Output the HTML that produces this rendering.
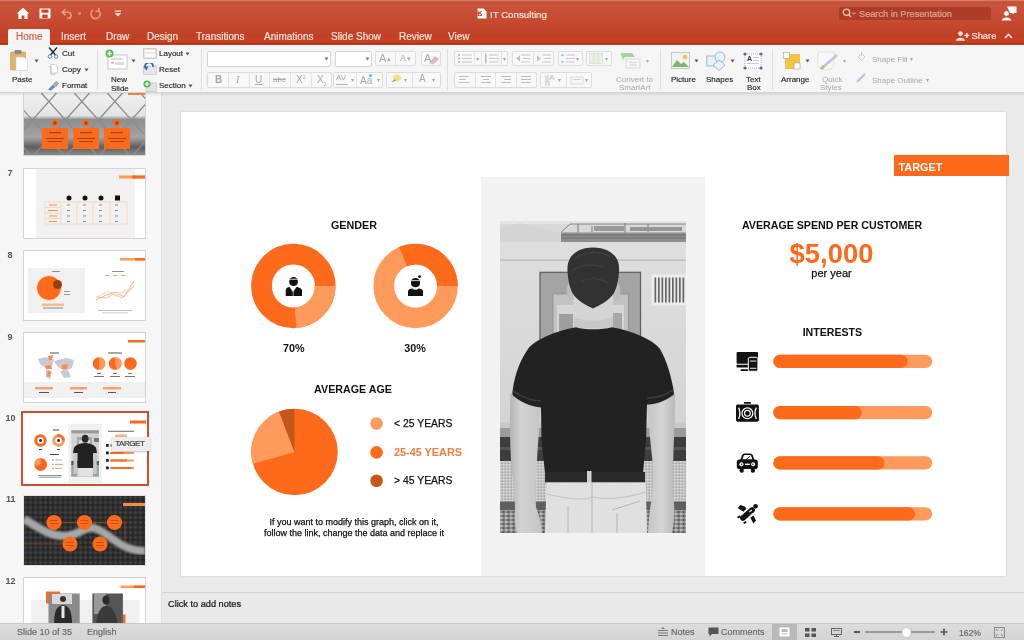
<!DOCTYPE html>
<html><head><meta charset="utf-8">
<style>
*{margin:0;padding:0;box-sizing:border-box}
html,body{width:1024px;height:640px;overflow:hidden;background:#e6e6e6;font-family:"Liberation Sans",sans-serif}
body{will-change:transform}
.a{position:absolute}
.t{position:absolute;white-space:nowrap;line-height:1}
#title{left:0;top:0;width:1024px;height:45px;background:linear-gradient(#e27c64 0px,#dd745c 1px,#c0523b 1.6px,#c9533b 5px,#c64c32 18px,#c3442a 32px,#bb4229 36px,#cc3f1e 39px,#cd3f1d 42px,#a63a22 43.6px,#b44c36 45px)}
.tab{color:#f8e0d8;font-size:10px;top:32px;-webkit-text-stroke:0.2px currentColor}
#ribbon{left:0;top:45px;width:1024px;height:48px;background:#f5f5f5;border-bottom:1px solid #d4d4d4;box-shadow:0 1px 2px rgba(0,0,0,0.08)}
.rl{font-size:8px;color:#262626;-webkit-text-stroke:0.15px #262626}
.gl{font-size:8px;color:#a8a8a8}
.btn{position:absolute;background:#f8f8f8;border:1px solid #dcdcdc;border-radius:2px}
.sep{position:absolute;top:49px;width:1px;height:41px;background:#dedede}
#left{left:0;top:93px;width:162px;height:530px;background:#f6f6f6;border-right:1px solid #e0e0e0}
.num{font-size:9px;font-weight:bold;color:#555}
.th{position:absolute;left:23px;width:123px;height:71px;background:#fff;border:1px solid #d4d4d4;overflow:hidden}
#status{left:0;top:623px;width:1024px;height:17px;background:linear-gradient(#dcdcdc,#d4d4d4);border-top:1px solid #c8c8c8}
.st{font-size:9px;color:#666;top:628px;-webkit-text-stroke:0.15px #666}
</style></head><body>

<!-- TITLE BAR -->
<div id="title" class="a"></div>
<!-- home icon -->
<svg class="a" style="left:16px;top:7px" width="14" height="13" viewBox="0 0 14 13"><path d="M7 0.8 L0.8 6.6 L2.4 6.6 L2.4 12 L5.6 12 L5.6 8.6 L8.4 8.6 L8.4 12 L11.6 12 L11.6 6.6 L13.2 6.6 Z" fill="#fff"/></svg>
<!-- save -->
<svg class="a" style="left:39px;top:8px" width="12" height="11" viewBox="0 0 12 11"><path d="M0.5 0.5 H11.5 V10.5 H0.5 Z" fill="#fff"/><rect x="2.5" y="1.5" width="7" height="3.3" fill="#c84a2d"/><rect x="3.2" y="6.5" width="5.5" height="3.5" fill="#c84a2d"/></svg>
<!-- undo -->
<svg class="a" style="left:61px;top:8px" width="13" height="11" viewBox="0 0 13 11"><path d="M4.5 1 L1.2 4.2 L4.5 7.3 M1.5 4.2 H7.5 A3.2 3.2 0 0 1 7.5 10.5 H6" stroke="#e59a85" stroke-width="1.6" fill="none"/></svg>
<div class="a" style="left:78px;top:12px;width:3px;height:3px;background:#e08a74;border-radius:1px"></div>
<!-- redo -->
<svg class="a" style="left:89px;top:7px" width="13" height="13" viewBox="0 0 13 13"><path d="M4 3.2 A4.6 4.6 0 1 0 9.5 3.5 M9.8 0.8 V4.2 H6.5" stroke="#e59a85" stroke-width="1.6" fill="none"/></svg>
<svg class="a" style="left:114px;top:10px" width="8" height="7" viewBox="0 0 8 7"><rect x="1" y="0.5" width="6" height="1.3" fill="#fbe0d8"/><path d="M0.8 3 H7.2 L4 6.5 Z" fill="#fbe0d8"/></svg>
<!-- ppt doc icon + title -->
<svg class="a" style="left:477px;top:8px" width="10" height="11" viewBox="0 0 10 11"><path d="M0.5 0.5 H6.5 L9.5 3.5 V10.5 H0.5 Z" fill="#fff"/><path d="M0.5 3 H5 V8 H0.5 Z" fill="#c84a2d"/><path d="M1.6 3.8 H3.4 A1.3 1.3 0 0 1 3.4 6.4 H2.4 V7.4" stroke="#fff" stroke-width="1" fill="none"/></svg>
<div class="t" style="left:490px;top:9.7px;font-size:9.7px;color:#fbe3dc;-webkit-text-stroke:0.2px #fbe3dc">IT Consulting</div>
<!-- search -->
<div class="a" style="left:839px;top:6.5px;width:152px;height:13px;background:#ad3d28;border-radius:2px"></div>
<svg class="a" style="left:842px;top:8px" width="14" height="11" viewBox="0 0 14 11"><circle cx="4.5" cy="4.3" r="3.2" stroke="#f0c0b2" stroke-width="1.3" fill="none"/><path d="M6.8 6.6 L9 9" stroke="#f0c0b2" stroke-width="1.4"/><path d="M10 4.5 L11.8 6.3 L13.6 4.5" stroke="#f0c0b2" stroke-width="1" fill="none"/></svg>
<div class="t" style="left:859px;top:9.5px;font-size:9.2px;color:#e2a393;-webkit-text-stroke:0.2px #e2a393">Search in Presentation</div>
<!-- feedback icon -->
<svg class="a" style="left:1001px;top:6px" width="16" height="15" viewBox="0 0 16 15"><path d="M6 0.5 H15.5 V7 H13 L11.5 8.5 V7 H9" fill="#fff"/><circle cx="5.5" cy="7.5" r="2.8" fill="#fff" stroke="#c84a2d" stroke-width="0.8"/><path d="M0.8 14.5 C0.8 10.5 10.2 10.5 10.2 14.5 Z" fill="#fff"/></svg>

<!-- tabs -->
<div class="a" style="left:8px;top:29px;width:42px;height:17px;background:#f6f4f3;border-radius:2px 2px 0 0"></div>
<div class="t tab" style="left:16px;color:#d25f45">Home</div>
<div class="t tab" style="left:61px">Insert</div>
<div class="t tab" style="left:106px">Draw</div>
<div class="t tab" style="left:147px">Design</div>
<div class="t tab" style="left:196px">Transitions</div>
<div class="t tab" style="left:264px">Animations</div>
<div class="t tab" style="left:331px">Slide Show</div>
<div class="t tab" style="left:399px">Review</div>
<div class="t tab" style="left:448px">View</div>
<!-- share -->
<svg class="a" style="left:956px;top:31px" width="14" height="10" viewBox="0 0 14 10"><circle cx="4.5" cy="2.6" r="2.3" fill="#fbe3dc"/><path d="M0 9.8 C0 5.6 9 5.6 9 9.8 Z" fill="#fbe3dc"/><path d="M10.8 2 V7 M8.3 4.5 H13.3" stroke="#fbe3dc" stroke-width="1.5"/></svg>
<div class="t tab" style="left:971.5px;top:31.5px;font-size:9.3px;color:#fbe3dc">Share</div>
<svg class="a" style="left:1004px;top:33px" width="9" height="6" viewBox="0 0 9 6"><path d="M1 5 L4.5 1.5 L8 5" stroke="#fbe3dc" stroke-width="1.6" fill="none"/></svg>

<!-- RIBBON -->
<div id="ribbon" class="a"></div>

<!-- paste -->
<svg class="a" style="left:10px;top:49px" width="18" height="22" viewBox="0 0 18 22"><rect x="0.5" y="3" width="15" height="18" rx="1" fill="#e0b36a" stroke="#c99a50" stroke-width="0.6"/><rect x="4.5" y="1" width="7" height="4" rx="1" fill="#8a8a8a"/><path d="M6 8 H14 L17.5 11.5 V21.5 H6 Z" fill="#fff" stroke="#cfcfcf" stroke-width="0.6"/></svg>
<svg class="a" style="left:34px;top:59px" width="5" height="4"><path d="M0.5 0.5 H4.5 L2.5 3.5Z" fill="#555"/></svg>
<div class="t rl" style="left:12px;top:76px">Paste</div>
<!-- cut copy format -->
<svg class="a" style="left:47px;top:47px" width="12" height="12" viewBox="0 0 12 12"><path d="M2 0.5 L8.5 8 M10 0.5 L3.5 8" stroke="#222" stroke-width="1.3"/><circle cx="3" cy="9.5" r="1.8" fill="none" stroke="#4f86c6" stroke-width="1"/><circle cx="9" cy="9.5" r="1.8" fill="none" stroke="#4f86c6" stroke-width="1"/></svg>
<div class="t rl" style="left:62px;top:50px">Cut</div>
<svg class="a" style="left:48px;top:64px" width="10" height="11" viewBox="0 0 10 11"><path d="M3 0.5 H7 L9.5 3 V9 H3 Z" fill="#fff" stroke="#bbb" stroke-width="0.7"/><path d="M0.5 2.5 H3 V10.5 H7 V9" fill="none" stroke="#bbb" stroke-width="0.7"/></svg>
<div class="t rl" style="left:62px;top:66px">Copy</div>
<svg class="a" style="left:84px;top:68px" width="5" height="4"><path d="M0.5 0.5 H4.5 L2.5 3.5Z" fill="#555"/></svg>
<svg class="a" style="left:47px;top:81px" width="12" height="10" viewBox="0 0 12 10"><path d="M1 8.5 L6 3.5 L8.5 6 L3.5 9.8 Z" fill="#6a8bb8"/><path d="M6.5 3 L9.5 0.5 L11.5 2.5 L9 5.5 Z" fill="#9bb4d6" stroke="#666" stroke-width="0.5"/></svg>
<div class="t rl" style="left:62px;top:82px">Format</div>
<div class="sep" style="left:97px"></div>
<!-- new slide -->
<svg class="a" style="left:105px;top:49px" width="23" height="21" viewBox="0 0 23 21"><rect x="3" y="6" width="19" height="14" fill="#fff" stroke="#bcbcbc" stroke-width="0.8"/><rect x="6" y="9" width="12" height="2" fill="#ddd"/><rect x="6" y="13" width="3" height="1.5" fill="#c9a0d0"/><rect x="10" y="13" width="9" height="3" fill="#ddd"/><circle cx="4.5" cy="4.5" r="4" fill="#5cb85c"/><path d="M4.5 2.3 V6.7 M2.3 4.5 H6.7" stroke="#fff" stroke-width="1.4"/></svg>
<svg class="a" style="left:131px;top:59px" width="5" height="4"><path d="M0.5 0.5 H4.5 L2.5 3.5Z" fill="#555"/></svg>
<div class="t rl" style="left:111px;top:76px">New</div>
<div class="t rl" style="left:111px;top:85px">Slide</div>
<svg class="a" style="left:143px;top:48px" width="14" height="11" viewBox="0 0 14 11"><rect x="0.5" y="0.5" width="13" height="10" fill="#e6e6e6" stroke="#bbb" stroke-width="0.6"/><rect x="2" y="2" width="10" height="2" fill="#fafafa"/><rect x="2" y="5.5" width="10" height="3.5" fill="#fafafa"/></svg>
<div class="t rl" style="left:159px;top:50px">Layout</div>
<svg class="a" style="left:185px;top:52px" width="5" height="4"><path d="M0.5 0.5 H4.5 L2.5 3.5Z" fill="#555"/></svg>
<svg class="a" style="left:143px;top:63px" width="14" height="12" viewBox="0 0 14 12"><rect x="0.5" y="3" width="13" height="8.5" fill="#e6e6e6" stroke="#bbb" stroke-width="0.6"/><path d="M3 6 A4 4 0 1 1 10 4" stroke="#2f6fba" stroke-width="1.8" fill="none"/><path d="M0.5 3.5 L3.5 7.5 L5.5 3.5Z" fill="#2f6fba"/></svg>
<div class="t rl" style="left:159px;top:66px">Reset</div>
<svg class="a" style="left:143px;top:80px" width="14" height="12" viewBox="0 0 14 12"><rect x="3" y="3" width="10.5" height="8.5" fill="#e2e2e2" stroke="#bbb" stroke-width="0.6"/><circle cx="4" cy="4" r="3.6" fill="#5cb85c"/><path d="M4 2 V6 M2 4 H6" stroke="#fff" stroke-width="1.2"/></svg>
<div class="t rl" style="left:159px;top:82px">Section</div>
<svg class="a" style="left:188px;top:84px" width="5" height="4"><path d="M0.5 0.5 H4.5 L2.5 3.5Z" fill="#555"/></svg>
<div class="sep" style="left:201px"></div>
<!-- font -->
<div class="btn" style="left:207px;top:51px;width:124px;height:16px;background:#fff;border-color:#d4d4d4"></div>
<svg class="a" style="left:324px;top:57px" width="5" height="4"><path d="M0.5 0.5 H4.5 L2.5 3.5Z" fill="#777"/></svg>
<div class="btn" style="left:335px;top:51px;width:37px;height:16px;background:#fff;border-color:#d4d4d4"></div>
<svg class="a" style="left:365px;top:57px" width="5" height="4"><path d="M0.5 0.5 H4.5 L2.5 3.5Z" fill="#777"/></svg>
<div class="btn" style="left:375px;top:51px;width:41px;height:15px"></div>
<div class="a" style="left:395px;top:52px;width:1px;height:13px;background:#e3e3e3"></div>
<div class="t gl" style="left:379px;top:53px;font-size:11px">A</div><div class="t gl" style="left:387px;top:55px;font-size:7px">&#9652;</div>
<div class="t gl" style="left:400px;top:54px;font-size:9px">A</div><div class="t gl" style="left:407px;top:55px;font-size:7px">&#9662;</div>
<div class="btn" style="left:421px;top:51px;width:20px;height:15px"></div>
<div class="t gl" style="left:424px;top:53px;font-size:11px">A</div>
<svg class="a" style="left:427px;top:54px" width="13" height="11" viewBox="0 0 13 11"><path d="M2 9 L8 2 L12 5 L6 10.5 Z" fill="#e8a4b8" opacity="0.85"/></svg>
<div class="btn" style="left:207px;top:72px;width:125px;height:16px"></div>
<div class="a" style="left:228px;top:73px;width:1px;height:14px;background:#e3e3e3"></div>
<div class="a" style="left:249px;top:73px;width:1px;height:14px;background:#e3e3e3"></div>
<div class="a" style="left:269px;top:73px;width:1px;height:14px;background:#e3e3e3"></div>
<div class="a" style="left:290px;top:73px;width:1px;height:14px;background:#e3e3e3"></div>
<div class="a" style="left:311px;top:73px;width:1px;height:14px;background:#e3e3e3"></div>
<div class="t gl" style="left:215px;top:75px;font-size:10px;font-weight:bold">B</div>
<div class="t gl" style="left:236px;top:75px;font-size:10px;font-style:italic;font-family:'Liberation Serif',serif">I</div>
<div class="t gl" style="left:255px;top:75px;font-size:10px;text-decoration:underline">U</div>
<div class="t gl" style="left:273px;top:76px;font-size:8px;text-decoration:line-through">abc</div>
<div class="t gl" style="left:296px;top:75px;font-size:10px">X<sup style="font-size:5px">2</sup></div>
<div class="t gl" style="left:317px;top:75px;font-size:10px">X<sub style="font-size:5px">2</sub></div>
<div class="btn" style="left:333px;top:72px;width:50px;height:16px"></div>
<div class="a" style="left:356px;top:73px;width:1px;height:14px;background:#e3e3e3"></div>
<div class="t gl" style="left:336px;top:74px;font-size:8px">AV</div>
<div class="a" style="left:336px;top:84px;width:12px;height:1px;background:#9ec0e0"></div>
<div class="t gl" style="left:351px;top:77px;font-size:6px">&#9662;</div>
<div class="t gl" style="left:360px;top:76px;font-size:10px">Aa</div>
<div class="a" style="left:369px;top:74px;width:3px;height:3px;border-radius:2px;background:#6ab0e8"></div>
<div class="t gl" style="left:377px;top:77px;font-size:6px">&#9662;</div>
<div class="btn" style="left:386px;top:72px;width:55px;height:16px"></div>
<div class="a" style="left:412px;top:73px;width:1px;height:14px;background:#e3e3e3"></div>
<svg class="a" style="left:390px;top:74px" width="12" height="10" viewBox="0 0 12 10"><ellipse cx="7" cy="4" rx="4" ry="3.5" fill="#f3e08a"/><path d="M1 8 L5 5 L6 7 Z" fill="#999"/></svg>
<div class="t gl" style="left:404px;top:77px;font-size:6px">&#9662;</div>
<div class="t gl" style="left:419px;top:74px;font-size:10px">A</div>
<div class="t gl" style="left:432px;top:77px;font-size:6px">&#9662;</div>
<div class="sep" style="left:447px"></div>
<!-- paragraph -->
<div class="btn" style="left:454px;top:51px;width:54px;height:15px"></div>
<div class="a" style="left:474px;top:52px;width:1px;height:13px;background:#e3e3e3"></div>
<div class="a" style="left:481px;top:52px;width:1px;height:13px;background:#e3e3e3"></div>
<div class="a" style="left:501px;top:52px;width:1px;height:13px;background:#e3e3e3"></div>
<svg class="a" style="left:457px;top:53px" width="16" height="11" viewBox="0 0 16 11"><g fill="#a9c6e6"><rect x="1" y="1" width="2" height="2"/><rect x="1" y="4.5" width="2" height="2"/><rect x="1" y="8" width="2" height="2"/></g><g fill="#c8c8c8"><rect x="5" y="1.5" width="10" height="1"/><rect x="5" y="5" width="10" height="1"/><rect x="5" y="8.5" width="10" height="1"/></g></svg>
<div class="t gl" style="left:476px;top:56px;font-size:6px">&#9662;</div>
<svg class="a" style="left:484px;top:53px" width="16" height="11" viewBox="0 0 16 11"><g fill="#bbb"><rect x="1" y="0.5" width="1.5" height="10"/></g><g fill="#c8c8c8"><rect x="5" y="1.5" width="10" height="1"/><rect x="5" y="5" width="10" height="1"/><rect x="5" y="8.5" width="10" height="1"/></g></svg>
<div class="t gl" style="left:503px;top:56px;font-size:6px">&#9662;</div>
<div class="btn" style="left:512px;top:51px;width:42px;height:15px"></div>
<div class="a" style="left:533px;top:52px;width:1px;height:13px;background:#e3e3e3"></div>
<svg class="a" style="left:515px;top:53px" width="16" height="11" viewBox="0 0 16 11"><path d="M1 5.5 L5 2.5 V8.5Z" fill="#a9c6e6"/><g fill="#c8c8c8"><rect x="6" y="1.5" width="9" height="1"/><rect x="8" y="5" width="7" height="1"/><rect x="6" y="8.5" width="9" height="1"/></g></svg>
<svg class="a" style="left:536px;top:53px" width="16" height="11" viewBox="0 0 16 11"><path d="M1 2.5 L5 5.5 L1 8.5Z" fill="#a9c6e6"/><g fill="#c8c8c8"><rect x="6" y="1.5" width="9" height="1"/><rect x="8" y="5" width="7" height="1"/><rect x="6" y="8.5" width="9" height="1"/></g></svg>
<div class="btn" style="left:558px;top:51px;width:25px;height:15px"></div>
<svg class="a" style="left:560px;top:53px" width="16" height="11" viewBox="0 0 16 11"><path d="M2.5 0.5 L4.5 3 H0.5Z M2.5 10.5 L4.5 8 H0.5Z" fill="#a9c6e6"/><g fill="#c8c8c8"><rect x="6" y="1.5" width="9" height="1"/><rect x="6" y="5" width="9" height="1"/><rect x="6" y="8.5" width="9" height="1"/></g></svg>
<div class="t gl" style="left:576px;top:56px;font-size:6px">&#9662;</div>
<div class="btn" style="left:586px;top:51px;width:26px;height:15px"></div>
<svg class="a" style="left:589px;top:53px" width="14" height="11" viewBox="0 0 14 11"><rect x="0.5" y="0.5" width="13" height="10" fill="#e8f2e0" stroke="#cfd8c8" stroke-width="0.6"/><path d="M4.8 1 V10 M9.2 1 V10" stroke="#cfd8c8" stroke-width="0.8"/></svg>
<div class="t gl" style="left:605px;top:56px;font-size:6px">&#9662;</div>
<div class="btn" style="left:454px;top:72px;width:83px;height:16px"></div>
<div class="a" style="left:475px;top:73px;width:1px;height:14px;background:#e3e3e3"></div>
<div class="a" style="left:495px;top:73px;width:1px;height:14px;background:#e3e3e3"></div>
<div class="a" style="left:516px;top:73px;width:1px;height:14px;background:#e3e3e3"></div>
<svg class="a" style="left:459px;top:75px" width="72" height="10" viewBox="0 0 72 10"><g fill="#bdbdbd"><rect x="0" y="1" width="10" height="1"/><rect x="0" y="4" width="7" height="1"/><rect x="0" y="7" width="10" height="1"/><rect x="22" y="1" width="10" height="1"/><rect x="24" y="4" width="6" height="1"/><rect x="22" y="7" width="10" height="1"/><rect x="42" y="1" width="10" height="1"/><rect x="45" y="4" width="7" height="1"/><rect x="42" y="7" width="10" height="1"/><rect x="62" y="1" width="10" height="1"/><rect x="62" y="4" width="10" height="1"/><rect x="62" y="7" width="10" height="1"/></g></svg>
<div class="btn" style="left:540px;top:72px;width:52px;height:16px"></div>
<div class="a" style="left:566px;top:73px;width:1px;height:14px;background:#e3e3e3"></div>
<div class="t gl" style="left:545px;top:74px;font-size:8px;color:#b5b5b5">||A</div>
<div class="t gl" style="left:545px;top:81px;font-size:5px;color:#b5b5b5">||||</div>
<div class="t gl" style="left:558px;top:77px;font-size:6px">&#9662;</div>
<svg class="a" style="left:570px;top:74px" width="14" height="12" viewBox="0 0 14 12"><rect x="1" y="3" width="12" height="7" fill="none" stroke="#cfcfcf" stroke-width="0.8"/><rect x="3" y="5" width="8" height="1" fill="#cfcfcf"/></svg>
<div class="t gl" style="left:585px;top:77px;font-size:6px">&#9662;</div>
<!-- smartart -->
<svg class="a" style="left:620px;top:52px" width="22" height="17" viewBox="0 0 22 17"><path d="M0.5 1 H12 L15 5 H5 L3 8 Z" fill="#a8cfa0"/><rect x="6" y="7" width="14" height="9" fill="#f5f5f5" stroke="#cfcfcf" stroke-width="0.7"/><rect x="9" y="10" width="8" height="1" fill="#d8d8d8"/><rect x="9" y="12.5" width="8" height="1" fill="#d8d8d8"/></svg>
<div class="t gl" style="left:646px;top:58px;font-size:6px">&#9662;</div>
<div class="t gl" style="left:616px;top:76px">Convert to</div>
<div class="t gl" style="left:619px;top:84px">SmartArt</div>
<div class="sep" style="left:660px"></div>
<!-- picture shapes textbox -->
<svg class="a" style="left:671px;top:52px" width="19" height="17" viewBox="0 0 19 17"><rect x="0.5" y="0.5" width="18" height="16" fill="#f2f2f2" stroke="#bdbdbd" stroke-width="0.8"/><path d="M1 15 L6 8 L10 12 L13 10 L18 15 Z" fill="#7fb86a"/><circle cx="14" cy="5" r="2.3" fill="#f0c050"/></svg>
<svg class="a" style="left:694px;top:59px" width="5" height="4"><path d="M0.5 0.5 H4.5 L2.5 3.5Z" fill="#555"/></svg>
<div class="t rl" style="left:671px;top:76px">Picture</div>
<svg class="a" style="left:706px;top:51px" width="21" height="20" viewBox="0 0 21 20"><rect x="0.8" y="5" width="10" height="10" fill="#eaf3fb" stroke="#8cb8e0" stroke-width="1"/><circle cx="14" cy="6" r="5" fill="#eaf3fb" stroke="#8cb8e0" stroke-width="1"/><path d="M13 9 L19 14 L13 19.5 L7 14 Z" fill="#eaf3fb" stroke="#8cb8e0" stroke-width="1"/></svg>
<svg class="a" style="left:730px;top:59px" width="5" height="4"><path d="M0.5 0.5 H4.5 L2.5 3.5Z" fill="#555"/></svg>
<div class="t rl" style="left:706px;top:76px">Shapes</div>
<svg class="a" style="left:743px;top:52px" width="20" height="18" viewBox="0 0 20 18"><rect x="2" y="2" width="16" height="14" fill="#fff" stroke="#9a9a9a" stroke-width="0.7" stroke-dasharray="1 1"/><g fill="#3a6fb0"><circle cx="2" cy="2" r="1.6"/><circle cx="18" cy="2" r="1.6"/><circle cx="2" cy="16" r="1.6"/><circle cx="18" cy="16" r="1.6"/></g><text x="4" y="9" font-size="7" font-weight="bold" fill="#333" font-family="Liberation Sans">A</text><g fill="#ccc"><rect x="10" y="5" width="6" height="1"/><rect x="10" y="8" width="6" height="1"/><rect x="4" y="11" width="12" height="1"/></g></svg>
<div class="t rl" style="left:746px;top:76px">Text</div>
<div class="t rl" style="left:747px;top:84px">Box</div>
<div class="sep" style="left:772px"></div>
<!-- arrange -->
<svg class="a" style="left:783px;top:52px" width="18" height="18" viewBox="0 0 18 18"><rect x="2" y="2" width="15" height="15" fill="#f5c242"/><rect x="0.5" y="0.5" width="6" height="6" fill="#fff" stroke="#999" stroke-width="0.6"/><rect x="11" y="11" width="6" height="6" fill="#fff" stroke="#999" stroke-width="0.6"/></svg>
<svg class="a" style="left:805px;top:59px" width="5" height="4"><path d="M0.5 0.5 H4.5 L2.5 3.5Z" fill="#555"/></svg>
<div class="t rl" style="left:781px;top:76px">Arrange</div>
<svg class="a" style="left:817px;top:51px" width="25" height="20" viewBox="0 0 25 20"><path d="M1 1 H17 V12 C17 17 12 19 9 19 C4 19 1 16 1 12 Z" fill="#f7f7f7" stroke="#d8d8d8" stroke-width="0.7"/><path d="M5 17 L20 4" stroke="#b0c8e0" stroke-width="2.5"/><path d="M4 18 L7 15" stroke="#e0b070" stroke-width="3"/></svg>
<div class="t gl" style="left:843px;top:58px;font-size:6px">&#9662;</div>
<div class="t gl" style="left:822px;top:76px">Quick</div>
<div class="t gl" style="left:820px;top:84px">Styles</div>
<svg class="a" style="left:856px;top:52px" width="11" height="11" viewBox="0 0 11 11"><path d="M2 5 L5.5 1.5 L9 5 L5.5 8.5 Z" fill="none" stroke="#c8c8c8" stroke-width="0.9"/><path d="M5.5 0 V4" stroke="#c8c8c8" stroke-width="0.9"/></svg>
<div class="t gl" style="left:872px;top:56px">Shape Fill</div>
<div class="t gl" style="left:910px;top:56px;font-size:6px">&#9662;</div>
<svg class="a" style="left:856px;top:73px" width="11" height="10" viewBox="0 0 11 10"><path d="M1 9 L9 1" stroke="#a8c4e4" stroke-width="2"/></svg>
<div class="t gl" style="left:872px;top:77px">Shape Outline</div>
<div class="t gl" style="left:926px;top:77px;font-size:6px">&#9662;</div>

<!-- MAIN AREA -->
<div class="a" style="left:162px;top:93px;width:862px;height:500px;background:#eaeaea"></div>
<div class="a" style="left:162px;top:592px;width:862px;height:1px;background:#d0d0d0"></div>
<div class="a" style="left:162px;top:593px;width:862px;height:30px;background:#e9e9e9"></div>
<div class="t" style="left:168px;top:599.5px;font-size:9.2px;color:#111;-webkit-text-stroke:0.2px #111">Click to add notes</div>

<!-- SLIDE -->
<div class="a" style="left:181px;top:111.5px;width:825px;height:464.5px;background:#fff;box-shadow:0 0 2px rgba(0,0,0,0.15)"></div>
<div class="a" style="left:481px;top:177px;width:224px;height:399px;background:#f2f2f2"></div>
<svg class="a" style="left:0;top:0" width="1024" height="640" viewBox="0 0 1024 640">
<circle cx="293.4" cy="286" r="31.85" fill="none" stroke="#fe6a1b" stroke-width="20.7"/>
<path d="M335.60 286.00 A42.2 42.2 0 0 1 296.34 328.10 L294.90 307.45 A21.5 21.5 0 0 0 314.90 286.00 Z" fill="#fe9a5c"/>
<circle cx="415.6" cy="286" r="31.85" fill="none" stroke="#fe9a5c" stroke-width="20.7"/>
<path d="M399.11 247.15 A42.2 42.2 0 0 1 457.80 286.00 L437.10 286.00 A21.5 21.5 0 0 0 407.20 266.21 Z" fill="#fe6a1b"/>
<circle cx="294.5" cy="452" r="43.3" fill="#fe6a1b"/>
<path d="M294.5 452 L252.88 463.94 A43.3 43.3 0 0 1 278.98 411.58 Z" fill="#fe9a5c"/>
<path d="M294.5 452 L278.98 411.58 A43.3 43.3 0 0 1 294.50 408.70 Z" fill="#c4561c"/>
<circle cx="376.6" cy="423.5" r="6.3" fill="#fe9a5c"/>
<circle cx="376.6" cy="452.4" r="6.3" fill="#fe6a1b"/>
<circle cx="376.6" cy="480.7" r="6.3" fill="#c4561c"/>
<!-- bars -->
<g>
<rect x="773.3" y="354.7" width="159" height="13.3" rx="6.65" fill="#fe9a5c"/>
<rect x="773.3" y="354.7" width="134.3" height="13.3" rx="6.65" fill="#fe6a1b"/>
<rect x="773.3" y="405.9" width="159" height="13.3" rx="6.65" fill="#fe9a5c"/>
<rect x="773.3" y="405.9" width="88.5" height="13.3" rx="6.65" fill="#fe6a1b"/>
<rect x="773.3" y="456.25" width="159" height="13.3" rx="6.65" fill="#fe9a5c"/>
<rect x="773.3" y="456.25" width="111.4" height="13.3" rx="6.65" fill="#fe6a1b"/>
<rect x="773.3" y="507.2" width="159" height="13.3" rx="6.65" fill="#fe9a5c"/>
<rect x="773.3" y="507.2" width="142" height="13.3" rx="6.65" fill="#fe6a1b"/>
</g>
<!-- male icon -->
<g fill="#111">
<path d="M289.3 281 C289.3 275.5 297.8 275.5 297.8 281 L297.8 282.5 C297.8 287 289.3 287 289.3 282.5 Z"/>
<path d="M285.7 296.1 V290.5 C285.7 288.5 287.5 287.3 289.5 287.1 L293 292 L296.5 287.1 C298.5 287.3 302 288.5 302 290.5 V296.1 Z"/>
</g>
<path d="M289.6 279.3 H297.5" stroke="#fff" stroke-width="0.8"/>
<path d="M293.2 291 V296" stroke="#fff" stroke-width="0.6"/>
<!-- female icon -->
<g fill="#111">
<path d="M411 282 C411 276.5 420 276.5 420 282 L420 283.5 C420 288.5 411 288.5 411 283.5 Z"/>
<circle cx="419.5" cy="276.6" r="1.4"/>
<path d="M408 296 V291.5 C408 289.5 410 288.5 412.5 288.5 C413.5 290.3 417.5 290.3 418.5 288.5 C421 288.5 423 289.5 423 291.5 V296 Z"/>
</g>
<path d="M411.2 280.6 H419.8" stroke="#fff" stroke-width="0.8"/>
<!-- monitor icon -->
<g fill="#111">
<rect x="736.6" y="351.9" width="21.4" height="11.9" rx="0.8"/>
<rect x="736.6" y="364.8" width="12" height="2.6" rx="0.5"/>
<rect x="740.5" y="369.3" width="8" height="1.8" rx="0.9"/>
</g>
<rect x="748.3" y="357.3" width="9.6" height="14" rx="1.6" fill="#111" stroke="#fff" stroke-width="1"/>
<rect x="749.9" y="360.6" width="6.4" height="0.9" fill="#fff"/>
<rect x="749.9" y="367.8" width="6.4" height="0.9" fill="#fff"/>
<!-- camera icon -->
<path d="M736 406.3 C736 405 737 404.6 738.3 404.6 H756.6 C757.9 404.6 758.9 405.2 758.9 406.3 V420 C758.9 421.2 757.9 421.8 756.6 421.8 H738.3 C737 421.8 736 421.2 736 420 Z" fill="#111"/>
<rect x="743.8" y="402" width="7.2" height="1.8" rx="0.9" fill="#111"/>
<circle cx="747.4" cy="413.3" r="5.4" fill="none" stroke="#fff" stroke-width="1.2"/>
<circle cx="747.4" cy="413.3" r="2.9" fill="none" stroke="#fff" stroke-width="1.1"/>
<path d="M738.6 407.6 Q741.3 413.3 738.6 419 M756.3 407.6 Q753.6 413.3 756.3 419" stroke="#fff" stroke-width="1.3" fill="none"/>
<!-- car icon -->
<path d="M740.2 460.5 L742 455.3 C742.6 453.8 743.6 453.4 745.2 453.4 H749.6 C751.2 453.4 752.2 453.8 752.8 455.3 L754.6 460.5 Z" fill="#111"/>
<path d="M742.4 459.6 L743.6 456 C743.9 455.2 744.4 454.9 745.3 454.9 H749.5 C750.4 454.9 750.9 455.2 751.2 456 L752.4 459.6 Z" fill="#fff"/>
<path d="M746 459.5 L750 456.3" stroke="#111" stroke-width="0.9"/>
<rect x="736.8" y="459.6" width="21" height="9.4" rx="2.6" fill="#111"/>
<rect x="739.6" y="468" width="4.2" height="4.7" rx="1.9" fill="#111"/>
<rect x="750.8" y="468" width="4.2" height="4.7" rx="1.9" fill="#111"/>
<circle cx="741.4" cy="464.3" r="2" fill="#fff"/>
<circle cx="741.6" cy="464.3" r="0.7" fill="#111"/>
<circle cx="753.1" cy="464.3" r="2" fill="#fff"/>
<circle cx="752.9" cy="464.3" r="0.7" fill="#111"/>
<rect x="745" y="463.6" width="4.8" height="1.4" fill="#fff"/>
<!-- tools icon -->
<g fill="#111">
<rect x="738.6" y="511.2" width="17.8" height="5.6" rx="2.6" transform="rotate(-41 747.5 514)"/>
<circle cx="755.6" cy="506.2" r="2.3"/>
<path d="M737.7 508 L740.5 505.1 L745.1 506.7 L746.4 508.8 L743.4 511.7 Z"/>
<path d="M750.4 517.8 L753.4 515.6 L756 520.4 L753.4 523.5 Z"/>
<path d="M737 516.9 L739.7 515.2 L740.7 516.9 L738.1 518.5 Z"/>
<path d="M743.1 522.2 L745.6 520.9 L746.6 522.8 L744.2 524.1 Z"/>
</g>
<path d="M749.2 512.2 L751.8 510" stroke="#fff" stroke-width="1.1"/>
<path d="M745.8 510.2 L743.2 512.8 M750.2 515.4 L752.4 513.2" stroke="#fff" stroke-width="0.8"/>
</svg>
<!-- photo placeholder -->
<div id="photo" class="a" style="left:500px;top:220.5px;width:186px;height:312px;background:#d6d6d6;overflow:hidden">
<svg width="186" height="312" viewBox="0 0 186 312">
<defs>
<filter id="bl" x="-5%" y="-5%" width="110%" height="110%"><feGaussianBlur stdDeviation="0.7"/></filter>
<linearGradient id="armL" x1="0" x2="1"><stop offset="0" stop-color="#b4b4b4"/><stop offset="0.35" stop-color="#d2d2d2"/><stop offset="1" stop-color="#c4c4c4"/></linearGradient>
<linearGradient id="armR" x1="0" x2="1"><stop offset="0" stop-color="#c4c4c4"/><stop offset="0.55" stop-color="#d4d4d4"/><stop offset="1" stop-color="#b8b8b8"/></linearGradient>
<linearGradient id="trainbody" x1="0" x2="0" y1="0" y2="1"><stop offset="0" stop-color="#dedede"/><stop offset="1" stop-color="#d4d4d4"/></linearGradient>
<pattern id="grav" width="3" height="3" patternUnits="userSpaceOnUse"><rect width="3" height="3" fill="#c2c2c2"/><rect x="0" y="0" width="1.5" height="1.5" fill="#dcdcdc"/><rect x="1.5" y="1.5" width="1.2" height="1.2" fill="#9c9c9c"/></pattern>
<pattern id="grav2" width="5" height="4" patternUnits="userSpaceOnUse"><rect width="5" height="4" fill="#8e8e8e"/><rect x="0" y="0" width="2.5" height="2" fill="#b8b8b8"/><rect x="2.5" y="2" width="2" height="2" fill="#5a5a5a"/></pattern>
</defs>
<g filter="url(#bl)">
<!-- top band -->
<rect x="0" y="0" width="186" height="21" fill="#d9d9d9"/>
<path d="M0 0 H186 V3 H0Z" fill="#e4e4e4"/>
<path d="M20 2 L60 12 V21 H0 V8Z" fill="#d0d0d0" opacity="0.6"/>
<rect x="61" y="11.5" width="125" height="9.5" fill="#8e8e8e"/>
<path d="M61 14 H186 M61 17 H186" stroke="#6a6a6a" stroke-width="0.9"/>
<path d="M61 11.5 L70 3 H186" stroke="#7a7a7a" stroke-width="0.9" fill="none"/>
<path d="M78 11.5 V3 M92 11.5 V5 M125 11.5 V2 M148 11.5 V3" stroke="#7a7a7a" stroke-width="1"/>
<rect x="94" y="5" width="30" height="5" fill="#9a9a9a"/>
<rect x="130" y="6" width="52" height="4" fill="#959595"/>
<!-- train body -->
<rect x="0" y="21" width="186" height="181.5" fill="url(#trainbody)"/>
<rect x="0" y="38.5" width="186" height="1.3" fill="#b8b8b8"/>
<!-- window frame -->
<rect x="40" y="51.3" width="100.5" height="80" fill="#a4a4a4" stroke="#5e5e5e" stroke-width="1.2"/>
<rect x="52" y="72" width="77.3" height="59" fill="#9a9a9a"/>
<rect x="53.5" y="73.5" width="74.3" height="57" fill="#c2c2c2"/>
<rect x="57" y="84" width="67" height="46" fill="#d6d6d6"/>
<rect x="59" y="93" width="14" height="37" fill="#9e9e9e"/>
<rect x="110" y="92" width="12" height="38" fill="#a8a8a8"/>
<rect x="74" y="98" width="36" height="5" fill="#ececec"/>
<!-- vent -->
<rect x="151.5" y="53.5" width="34.5" height="31" fill="#ececec"/>
<g fill="#666"><rect x="154.5" y="56.5" width="1.7" height="25"/><rect x="158" y="56.5" width="1.7" height="25"/><rect x="161.5" y="56.5" width="1.7" height="25"/><rect x="165" y="56.5" width="1.7" height="25"/><rect x="168.5" y="56.5" width="1.7" height="25"/><rect x="172" y="56.5" width="1.7" height="25"/><rect x="175.5" y="56.5" width="1.7" height="25"/><rect x="179" y="56.5" width="1.7" height="25"/><rect x="182.5" y="56.5" width="1.7" height="25"/></g>
<!-- lower train -->
<rect x="0" y="201.5" width="186" height="5.5" fill="#c8c8c8"/>
<rect x="0" y="207" width="186" height="9.5" fill="#9a9a9a"/>
<rect x="0" y="216" width="186" height="24" fill="#3e3e3e"/>
<rect x="0" y="226" width="186" height="3" fill="#555"/>
<rect x="0" y="240" width="186" height="41" fill="url(#grav)"/>
<rect x="0" y="280.5" width="186" height="9" fill="#5e5e5e"/>
<rect x="0" y="289.5" width="186" height="22.5" fill="url(#grav2)"/>
<!-- ears + neck -->
<ellipse cx="70.5" cy="70" rx="3.8" ry="9" fill="#bdbdbd"/>
<ellipse cx="116.5" cy="70" rx="3.8" ry="9" fill="#bdbdbd"/>
<path d="M73.5 68 H113 L113 108 H74 Z" fill="#d4d4d4"/>
<path d="M74 96 C84 101 102 101 113 96 V107 H74Z" fill="#c8c8c8"/>
<!-- hair -->
<path d="M67.5 50 C66.5 35 77 26.4 93 26.4 C109 26.4 120.5 35 119 50 C118.5 60 116.5 67 114 72 C110 79 99 85 93 87.4 C87 85 76 79 72.5 72 C70 67 68 60 67.5 50 Z" fill="#333"/>
<path d="M75 38 C82 31 98 29 111 36 M72 50 C80 44 92 42 104 46 M82 60 C90 56 100 57 108 62" stroke="#3d3d3d" stroke-width="1.6" fill="none"/>
<!-- arms -->
<path d="M10.5 172 C9.5 200 10 230 12 250 C13.5 265 15 275 15 288 C14 298 15 306 17 312 H42 C41 302 39 294 36 286 C35 270 36 255 37 240 C38 220 40 200 41 176 Z" fill="url(#armL)"/>
<path d="M146.5 172 C148 200 151 225 153 245 C154 262 152 276 150 288 C149 298 148 306 148 312 H172 C174 302 175 292 174 282 C172.5 265 173 250 173.5 230 C174.5 205 175.5 185 175 172 Z" fill="url(#armR)"/>
<!-- shirt -->
<path d="M76 106.3 C84 109 102 109 112 106.3 C132 110 152 118 160 128 C167 140 171 155 173.4 168 C174 172 174 174 173.4 174 C165 180 155 184 147 183.5 L146 220 L143 251.5 C110 253 75 253 45 251.5 L41.5 220 L41 186.5 C32 186 20 181 12.9 174.5 C12 172 12.5 170 12.9 168 C15 152 21 138 28 128 C36 118 56 110 76 106.3 Z" fill="#222"/>
<path d="M13 170 C22 176 33 180 41 180 M147 177 C156 177 166 174 173 169" stroke="#3a3a3a" stroke-width="1.6" fill="none"/>
<!-- belt -->
<rect x="45" y="251" width="100" height="10.5" fill="#2c2c2c"/>
<rect x="87" y="250" width="4.5" height="24" fill="#cfcfcf"/>
<!-- jeans -->
<path d="M46.5 261.5 H145.8 L147 312 H45 Z" fill="#e0e0e0"/>
<path d="M92 261.5 V312" stroke="#b4b4b4" stroke-width="1"/>
<path d="M47 273 C70 279 88 279 92 276 C108 279 128 277 145 271" stroke="#c0c0c0" stroke-width="1" fill="none"/>
<path d="M112 289 L140 280 M68 285 V312 M117 292 V312" stroke="#b0b0b0" stroke-width="0.9" fill="none"/>
</g>
</svg></div>
<!-- texts -->
<div class="t" style="left:254px;top:219.6px;width:200px;text-align:center;font-size:10.75px;font-weight:bold;color:#111">GENDER</div>
<div class="t" style="left:243.75px;top:342.6px;width:100px;text-align:center;font-size:10.75px;font-weight:bold;color:#111">70%</div>
<div class="t" style="left:365px;top:342.6px;width:100px;text-align:center;font-size:10.75px;font-weight:bold;color:#111">30%</div>
<div class="t" style="left:253px;top:384px;width:200px;text-align:center;font-size:10.7px;font-weight:bold;color:#111">AVERAGE AGE</div>
<div class="t" style="left:394px;top:419.2px;font-size:10.4px;color:#111;-webkit-text-stroke:0.25px #111">&lt; 25 YEARS</div>
<div class="t" style="left:394px;top:447.3px;font-size:10.86px;font-weight:bold;color:#f47c3c">25-45 YEARS</div>
<div class="t" style="left:394px;top:476.2px;font-size:10.4px;color:#111;-webkit-text-stroke:0.25px #111">&gt; 45 YEARS</div>
<div class="t" style="left:204px;top:518.4px;width:300px;text-align:center;font-size:9px;color:#111;-webkit-text-stroke:0.25px #111">If you want to modify this graph, click on it,</div>
<div class="t" style="left:204px;top:528.5px;width:300px;text-align:center;font-size:9px;color:#111;-webkit-text-stroke:0.25px #111">follow the link, change the data and replace it</div>
<div class="t" style="left:682px;top:219.7px;width:300px;text-align:center;font-size:10.67px;font-weight:bold;color:#111">AVERAGE SPEND PER CUSTOMER</div>
<div class="t" style="left:731.5px;top:240.4px;width:200px;text-align:center;font-size:27.4px;font-weight:bold;color:#fe6a1b">$5,000</div>
<div class="t" style="left:731.5px;top:268.2px;width:200px;text-align:center;font-size:11px;color:#111;-webkit-text-stroke:0.25px #111">per year</div>
<div class="t" style="left:732.4px;top:326.5px;width:200px;text-align:center;font-size:10.6px;font-weight:bold;color:#111">INTERESTS</div>
<div class="a" style="left:894px;top:155.3px;width:115px;height:21.2px;background:#fe6a1b"></div>
<div class="t" style="left:898.5px;top:162px;font-size:10.9px;font-weight:bold;color:#fff">TARGET</div>
<!-- LEFT PANEL -->
<div id="left" class="a"></div>

<!-- THUMBNAILS -->
<!-- thumb 6 (partial) -->
<div class="a" style="left:23px;top:93px;width:123px;height:63px;overflow:hidden;border:1px solid #d4d4d4;border-top:none">
<svg width="123" height="63" viewBox="0 0 123 63">
<defs><filter id="tb"><feGaussianBlur stdDeviation="0.5"/></filter>
<linearGradient id="fence" x1="0" y1="0" x2="0" y2="1"><stop offset="0" stop-color="#f0f0f0"/><stop offset="0.36" stop-color="#e4e4e4"/><stop offset="0.42" stop-color="#8e8e8e"/><stop offset="0.7" stop-color="#a4a4a4"/><stop offset="0.86" stop-color="#5e5e5e"/><stop offset="1" stop-color="#909090"/></linearGradient></defs>
<g filter="url(#tb)">
<rect width="123" height="63" fill="url(#fence)"/>
<path d="M-114.7 0 L-58.4 63 M-99.5 0 L-155.8 63 M-81.7 0 L-25.4 63 M-66.5 0 L-122.8 63 M-48.7 0 L7.6 63 M-33.5 0 L-89.8 63 M-15.7 0 L40.6 63 M-0.5 0 L-56.8 63 M17.3 0 L73.6 63 M32.5 0 L-23.8 63 M50.3 0 L106.6 63 M65.5 0 L9.2 63 M83.3 0 L139.6 63 M98.5 0 L42.2 63 M116.3 0 L172.6 63 M131.5 0 L75.2 63 M149.3 0 L205.6 63 M164.5 0 L108.2 63 M182.3 0 L238.6 63 M197.5 0 L141.2 63 M215.3 0 L271.6 63 M230.5 0 L174.2 63 M248.3 0 L304.6 63 M263.5 0 L207.2 63" stroke="#8c8c8c" stroke-width="1.2" fill="none"/>
<g fill="#fe6a1b"><rect x="18" y="35" width="26" height="21"/><rect x="49" y="35" width="26" height="21"/><rect x="80" y="35" width="26" height="21"/>
<circle cx="31" cy="30" r="3.5"/><circle cx="62" cy="30" r="3.5"/><circle cx="93" cy="30" r="3.5"/></g>
<g fill="#a8400f"><circle cx="31" cy="30" r="1.7"/><circle cx="62" cy="30" r="1.7"/><circle cx="93" cy="30" r="1.7"/>
<rect x="25" y="39" width="12" height="1.2"/><rect x="56" y="39" width="12" height="1.2"/><rect x="87" y="39" width="12" height="1.2"/>
<rect x="22" y="45" width="18" height="1"/><rect x="53" y="45" width="18" height="1"/><rect x="84" y="45" width="18" height="1"/>
<rect x="24" y="48" width="14" height="1"/><rect x="55" y="48" width="14" height="1"/><rect x="86" y="48" width="14" height="1"/></g>
<rect x="104" y="0" width="18" height="2" fill="#fe8a4a"/>
</g></svg></div>

<!-- thumb 7 -->
<div class="t num" style="left:7.5px;top:168.5px">7</div>
<div class="th" style="top:168px">
<svg width="121" height="69" viewBox="0 0 121 69">
<rect x="12" y="0" width="99" height="69" fill="#f1f1f1"/>
<rect x="95" y="6.5" width="26" height="3" fill="#fe9a5c"/><rect x="108" y="6.5" width="13" height="3" fill="#fe6a1b"/>
<g fill="#111"><circle cx="45" cy="29" r="2.5"/><circle cx="61" cy="29" r="2.5"/><circle cx="77" cy="29" r="2.5"/><rect x="91" y="26.5" width="5" height="5"/></g>
<g stroke="#f5c8a8" stroke-width="0.6" fill="none"><rect x="21" y="33" width="82" height="22"/><path d="M37 33 V55 M53 33 V55 M69 33 V55 M86 33 V55 M21 38.5 H37 M21 44 H37 M21 49.5 H37"/></g>
<g fill="#fe8a4a"><rect x="25" y="35.5" width="8" height="1"/><rect x="24" y="41" width="10" height="1"/><rect x="25" y="46.5" width="8" height="1"/><rect x="25" y="52" width="8" height="1"/></g>
<g fill="#888"><rect x="43" y="35.5" width="3" height="1"/><rect x="59" y="35.5" width="3" height="1"/><rect x="75" y="35.5" width="3" height="1"/><rect x="91" y="35.5" width="3" height="1"/>
<rect x="43" y="41" width="3" height="1"/><rect x="59" y="41" width="3" height="1"/><rect x="75" y="41" width="3" height="1"/><rect x="91" y="41" width="3" height="1"/>
<rect x="43" y="46.5" width="3" height="1"/><rect x="59" y="46.5" width="3" height="1"/><rect x="75" y="46.5" width="3" height="1"/><rect x="91" y="46.5" width="3" height="1"/>
<rect x="43" y="52" width="3" height="1"/><rect x="59" y="52" width="3" height="1"/><rect x="75" y="52" width="3" height="1"/><rect x="91" y="52" width="3" height="1"/></g>
</svg></div>

<!-- thumb 8 -->
<div class="t num" style="left:7.5px;top:250.5px">8</div>
<div class="th" style="top:250px">
<svg width="121" height="69" viewBox="0 0 121 69">
<rect x="96" y="7" width="25" height="2.5" fill="#fe9a5c"/><rect x="111" y="7" width="10" height="2.5" fill="#fe6a1b"/>
<rect x="4" y="17" width="57" height="45" fill="#f0f0f0"/>
<rect x="28" y="20" width="8" height="0.8" fill="#777"/>
<circle cx="25" cy="37" r="12" fill="#fe6a1b"/><circle cx="25" cy="37" r="12.5" fill="none" stroke="#fdd0b0" stroke-width="0.8"/>
<circle cx="33.5" cy="33.5" r="4.5" fill="#9a3e10"/>
<g fill="#888"><rect x="40" y="40" width="6" height="0.8"/><rect x="40" y="43" width="6" height="0.8"/></g>
<rect x="18" y="52.5" width="22" height="2.5" fill="#fdb88c"/>
<rect x="19" y="56.5" width="20" height="1" fill="#7a8aa0"/>
<rect x="88" y="20" width="12" height="0.8" fill="#777"/>
<g fill="#fe9a5c"><rect x="81" y="24" width="4" height="1"/><rect x="89" y="24" width="4" height="1"/><rect x="97" y="24" width="4" height="1"/></g>
<g fill="none" stroke-width="0.8"><path d="M72 49 L82 44 L92 41 L100 46 L110 30" stroke="#fe9a5c"/><path d="M72 46 L82 47 L90 43 L98 47 L110 35" stroke="#f7b088"/><path d="M72 47 L84 40 L92 45 L100 40 L110 36" stroke="#fdc8a0"/></g>
<rect x="74" y="59" width="34" height="0.8" fill="#aaa"/><rect x="78" y="61.5" width="26" height="0.8" fill="#bbb"/>
</svg></div>

<!-- thumb 9 -->
<div class="t num" style="left:7.5px;top:332.5px">9</div>
<div class="th" style="top:332px">
<svg width="121" height="69" viewBox="0 0 121 69">
<rect x="104" y="7" width="17" height="2.5" fill="#fe6a1b"/>
<rect x="0" y="49" width="121" height="16" fill="#f0f0f0"/>
<rect x="26" y="19.5" width="9" height="1" fill="#555"/><rect x="84" y="19.5" width="14" height="1" fill="#555"/>
<g fill="#c8c8d0"><path d="M14 26 L22 24 L30 27 L28 33 L22 35 L16 31 Z"/><path d="M30 28 L42 25 L50 27 L48 35 L40 38 L34 34 Z"/><path d="M22 36 L28 38 L26 46 L22 44 Z"/><path d="M36 38 L44 37 L47 44 L40 45 Z"/></g>
<g fill="#fe8a4a"><path d="M21 33 L27 32 L28 36 L22 36 Z"/><path d="M24 23 L29 22 L28 27 L25 27Z"/><path d="M38 32 L44 31 L43 36 L38 36Z"/><path d="M24 38 L27 39 L26 44 L23 43Z"/></g>
<circle cx="75" cy="30.5" r="6.3" fill="#fe6a1b"/><circle cx="91" cy="30.5" r="6.3" fill="#fe6a1b"/><circle cx="106.5" cy="30.5" r="6.3" fill="#fe6a1b"/>
<path d="M75 24.2 A6.3 6.3 0 0 1 75 36.8 Z" fill="#fe9a5c"/><path d="M91 24.2 A6.3 6.3 0 0 1 93 36.6 L91 30.5Z" fill="#fe9a5c"/>
<g fill="#777"><rect x="73" y="40" width="4" height="1"/><rect x="89" y="40" width="4" height="1"/><rect x="104" y="40" width="4" height="1"/><rect x="70" y="43" width="10" height="1"/><rect x="86" y="43" width="10" height="1"/><rect x="101" y="43" width="10" height="1"/></g>
<g fill="#fda070"><rect x="11" y="54" width="18" height="2.5"/><rect x="46" y="54" width="17" height="2.5"/><rect x="79" y="54" width="18" height="2.5"/></g>
<g fill="#555"><rect x="15" y="59" width="10" height="1"/><rect x="50" y="59" width="9" height="1"/><rect x="84" y="59" width="8" height="1"/></g>
</svg></div>

<!-- thumb 10 selected -->
<div class="t num" style="left:5.5px;top:414px">10</div>
<div class="a" style="left:21px;top:411px;width:128px;height:75px;border:2px solid #c94f30;background:#fff"></div>
<div class="a" style="left:24px;top:414px;width:122px;height:69px;overflow:hidden;background:#fff">
<svg width="122" height="69" viewBox="0 0 122 69">
<rect x="106" y="6.5" width="16" height="3" fill="#fe6a1b"/>
<rect x="44.5" y="9.8" width="33.2" height="59.2" fill="#f0f0f0"/>
<rect x="47.3" y="16.3" width="27.6" height="46.3" fill="#d2d2d2"/>
<rect x="47.3" y="16.3" width="27.6" height="3" fill="#9a9a9a"/>
<rect x="53" y="23" width="15" height="11" fill="#a8a8a8"/>
<rect x="55" y="26" width="11" height="8" fill="#d8d8d8"/>
<rect x="70" y="24" width="4.9" height="4" fill="#777"/>
<rect x="47.3" y="47" width="27.6" height="4" fill="#555"/>
<rect x="47.3" y="51" width="27.6" height="11.6" fill="#a0a0a0"/>
<ellipse cx="61.2" cy="24.8" rx="3.4" ry="4" fill="#2b2b2b"/>
<path d="M50 33.5 C53 30 57 29 61 29 C65 29 69 30 72 33.5 L73 39 H69 V54 H53.5 V39 H49 Z" fill="#222"/>
<rect x="49.5" y="39" width="3.6" height="21" fill="#c8c8c8"/><rect x="69.2" y="39" width="3.6" height="21" fill="#c8c8c8"/>
<rect x="53.5" y="54" width="15.5" height="8.6" fill="#e2e2e2"/>
<rect x="29" y="15.5" width="6" height="1" fill="#444"/>
<circle cx="16.5" cy="26.5" r="6.2" fill="#fe6a1b"/><circle cx="16.5" cy="26.5" r="3.2" fill="#fff"/><circle cx="16.5" cy="26.5" r="1.4" fill="#222"/>
<circle cx="34.6" cy="26.5" r="6.2" fill="#fe9a5c"/><path d="M32.5 20.6 A6.2 6.2 0 0 1 40.8 26.5 L34.6 26.5Z" fill="#fe6a1b"/><circle cx="34.6" cy="26.5" r="3.2" fill="#fff"/><circle cx="34.6" cy="26.5" r="1.4" fill="#222"/>
<rect x="15" y="35" width="3" height="1" fill="#444"/><rect x="33" y="35" width="3" height="1" fill="#444"/>
<rect x="26" y="40" width="9" height="1" fill="#444"/>
<circle cx="16.7" cy="50.5" r="6.4" fill="#fe6a1b"/><path d="M16.7 44.1 V50.5 L10.5 52 A6.4 6.4 0 0 1 15 44.3Z" fill="#fe9a5c"/>
<g fill="#aaa"><circle cx="29" cy="46" r="0.9"/><circle cx="29" cy="50.3" r="0.9"/><circle cx="29" cy="54.5" r="0.9"/><rect x="31" y="45.5" width="7" height="0.9"/><rect x="31" y="53.9" width="7" height="0.9"/></g>
<rect x="31" y="49.8" width="8" height="1" fill="#fe8a4a"/>
<rect x="14" y="61" width="24" height="0.9" fill="#888"/><rect x="15" y="62.7" width="22" height="0.9" fill="#888"/>
<rect x="84" y="16.8" width="26" height="0.9" fill="#555"/>
<rect x="91" y="20.5" width="12" height="3" fill="#fdb080"/>
<g><rect x="82" y="30" width="2.8" height="2.8" fill="#222"/><rect x="86.5" y="30.4" width="23.5" height="2" fill="#fe9a5c"/><rect x="86.5" y="30.4" width="19.8" height="2" fill="#fe6a1b"/>
<rect x="82" y="37.5" width="2.8" height="2.8" fill="#222"/><rect x="86.5" y="38" width="23.5" height="2" fill="#fe9a5c"/><rect x="86.5" y="38" width="13" height="2" fill="#fe6a1b"/>
<rect x="82" y="45" width="2.8" height="2.8" fill="#222"/><rect x="86.5" y="45.5" width="23.5" height="2" fill="#fe9a5c"/><rect x="86.5" y="45.5" width="16.5" height="2" fill="#fe6a1b"/>
<rect x="82" y="52.5" width="2.8" height="2.8" fill="#222"/><rect x="86.5" y="53" width="23.5" height="2" fill="#fe9a5c"/><rect x="86.5" y="53" width="21" height="2" fill="#fe6a1b"/></g>
</svg></div>
<!-- tooltip -->
<div class="a" style="left:111.5px;top:437px;width:38.5px;height:14px;background:#ececec;box-shadow:0 1px 2px rgba(0,0,0,0.25)"></div>
<div class="t" style="left:115.2px;top:440px;font-size:8px;color:#3a3a3a;letter-spacing:-0.45px;-webkit-text-stroke:0.2px #3a3a3a">TARGET</div>

<!-- thumb 11 -->
<div class="t num" style="left:6px;top:495px">11</div>
<div class="th" style="top:495px;border-color:#e0e0e0">
<svg width="121" height="69" viewBox="0 0 121 69">
<defs><filter id="tb11"><feGaussianBlur stdDeviation="0.8"/></filter>
<pattern id="tex" width="5" height="5" patternUnits="userSpaceOnUse"><rect width="5" height="5" fill="#2e2e2e"/><circle cx="1.5" cy="1.5" r="1.2" fill="#444"/><circle cx="3.8" cy="3.8" r="0.9" fill="#1c1c1c"/></pattern></defs>
<rect width="121" height="69" fill="url(#tex)"/>
<path d="M0 23 C15 32 25 40 40 40 C55 40 60 30 70 32 C85 36 95 55 121 55" stroke="#a6a6a6" stroke-width="8" fill="none" filter="url(#tb11)"/>
<rect x="99" y="7" width="22" height="3" fill="#fe8a4a"/>
<path d="M30 26.5 H101 V47.5" stroke="#c8501c" stroke-width="0.5" fill="none"/>
<path d="M0 48 H40" stroke="#c8501c" stroke-width="0.5"/>
<g fill="#fe6a1b"><circle cx="30" cy="26.5" r="7.6"/><circle cx="60.5" cy="26.5" r="7.6"/><circle cx="90.5" cy="26.5" r="7.6"/><circle cx="46" cy="48" r="7.6"/><circle cx="76" cy="48" r="7.6"/></g>
<g fill="#b8480f"><rect x="26" y="24" width="8" height="0.8"/><rect x="26" y="27" width="8" height="0.8"/><rect x="56.5" y="24" width="8" height="0.8"/><rect x="56.5" y="27" width="8" height="0.8"/><rect x="86.5" y="24" width="8" height="0.8"/><rect x="86.5" y="27" width="8" height="0.8"/><rect x="42" y="46" width="8" height="0.8"/><rect x="42" y="49" width="8" height="0.8"/><rect x="72" y="46" width="8" height="0.8"/><rect x="72" y="49" width="8" height="0.8"/></g>
</svg></div>

<!-- thumb 12 -->
<div class="t num" style="left:5.5px;top:577px">12</div>
<div class="a" style="left:23px;top:576.5px;width:123px;height:47px;overflow:hidden;background:#fff;border:1px solid #d4d4d4;border-bottom:none">
<svg width="123" height="47" viewBox="0 0 123 47">
<rect x="96.5" y="7.5" width="25" height="2.5" fill="#fe9a5c"/><rect x="110" y="7.5" width="12" height="2.5" fill="#fe6a1b"/>
<rect x="7.5" y="22" width="108" height="25" fill="#f0f0f0"/>
<rect x="22" y="13.5" width="14" height="12" fill="#fe6a1b"/>
<rect x="24.5" y="15.5" width="31.2" height="32" fill="#8a8a8a"/>
<rect x="28" y="16" width="20" height="10" fill="#d8d8d8"/>
<circle cx="39" cy="21" r="3" fill="#333"/>
<path d="M30 47 C30 32 33 28 39 27 C45 28 48 32 48 47Z" fill="#2a2a2a"/>
<rect x="37.5" y="28" width="3" height="12" fill="#e8e8e8"/>
<rect x="68.4" y="15.5" width="30.5" height="32" fill="#555"/>
<rect x="70" y="16" width="12" height="20" fill="#999"/>
<ellipse cx="82" cy="22" rx="3.6" ry="4.6" fill="#2a2a2a"/>
<path d="M72 47 C73 34 77 28 82 28 C88 28 92 34 94 47Z" fill="#3a3a3a"/>
<rect x="99" y="36.5" width="2.5" height="11" fill="#fe6a1b"/>
</svg></div>
<div class="a" style="left:0;top:93px;width:1024px;height:3px;background:linear-gradient(rgba(0,0,0,0.09),rgba(0,0,0,0))"></div>
<!-- STATUS -->
<div id="status" class="a"></div>
<div class="t st" style="left:17px">Slide 10 of 35</div>
<div class="t st" style="left:87px">English</div>
<svg class="a" style="left:658px;top:627px" width="11" height="10" viewBox="0 0 11 10"><g fill="#777"><rect x="0" y="3" width="10" height="1"/><rect x="0" y="5.5" width="10" height="1"/><rect x="0" y="8" width="10" height="1"/><path d="M3 2 L5 0 L7 2Z"/></g></svg>
<div class="t st" style="left:671px">Notes</div>
<svg class="a" style="left:708px;top:627px" width="11" height="10" viewBox="0 0 11 10"><path d="M0.5 0.5 H10.5 V7 H4 L1.5 9.5 V7 H0.5Z" fill="#555"/></svg>
<div class="t st" style="left:721px">Comments</div>
<div class="a" style="left:772px;top:624px;width:25px;height:16px;background:#b9b9b9"></div>
<svg class="a" style="left:779px;top:627px" width="11" height="10" viewBox="0 0 11 10"><rect x="0.5" y="0.5" width="10" height="9" fill="#fff"/><rect x="2.5" y="2" width="6" height="3" fill="#b9b9b9"/><rect x="2.5" y="6.3" width="6" height="1" fill="#b9b9b9"/></svg>
<svg class="a" style="left:805px;top:628px" width="11" height="9" viewBox="0 0 11 9"><g fill="#555"><rect x="0" y="0" width="4.5" height="3.5"/><rect x="6.5" y="0" width="4.5" height="3.5"/><rect x="0" y="5.5" width="4.5" height="3.5"/><rect x="6.5" y="5.5" width="4.5" height="3.5"/></g></svg>
<svg class="a" style="left:831px;top:628px" width="11" height="9" viewBox="0 0 11 9"><rect x="0.5" y="0.5" width="10" height="6" fill="none" stroke="#666" stroke-width="1"/><rect x="2" y="2" width="7" height="1" fill="#888"/><path d="M5.5 7 V8.5 M3 8.5 H8" stroke="#666" stroke-width="1"/></svg>
<div class="a" style="left:854px;top:631px;width:6px;height:2px;background:#555"></div>
<div class="a" style="left:865px;top:631px;width:70px;height:2px;background:#9a9a9a;border-radius:1px"></div>
<div class="a" style="left:902px;top:628px;width:9px;height:9px;background:#fff;border-radius:50%;box-shadow:0 0 1px #888"></div>
<svg class="a" style="left:940px;top:628px" width="8" height="8" viewBox="0 0 8 8"><path d="M4 0.5 V7.5 M0.5 4 H7.5" stroke="#555" stroke-width="1.6"/></svg>
<div class="t st" style="left:959px;font-size:8.6px;top:628.5px">162%</div>
<svg class="a" style="left:994px;top:627px" width="11" height="11" viewBox="0 0 11 11"><rect x="0.5" y="0.5" width="10" height="10" fill="none" stroke="#888" stroke-width="1"/><path d="M2 2 L4 4 M9 2 L7 4 M2 9 L4 7 M9 9 L7 7" stroke="#888" stroke-width="1"/></svg>
</body></html>
